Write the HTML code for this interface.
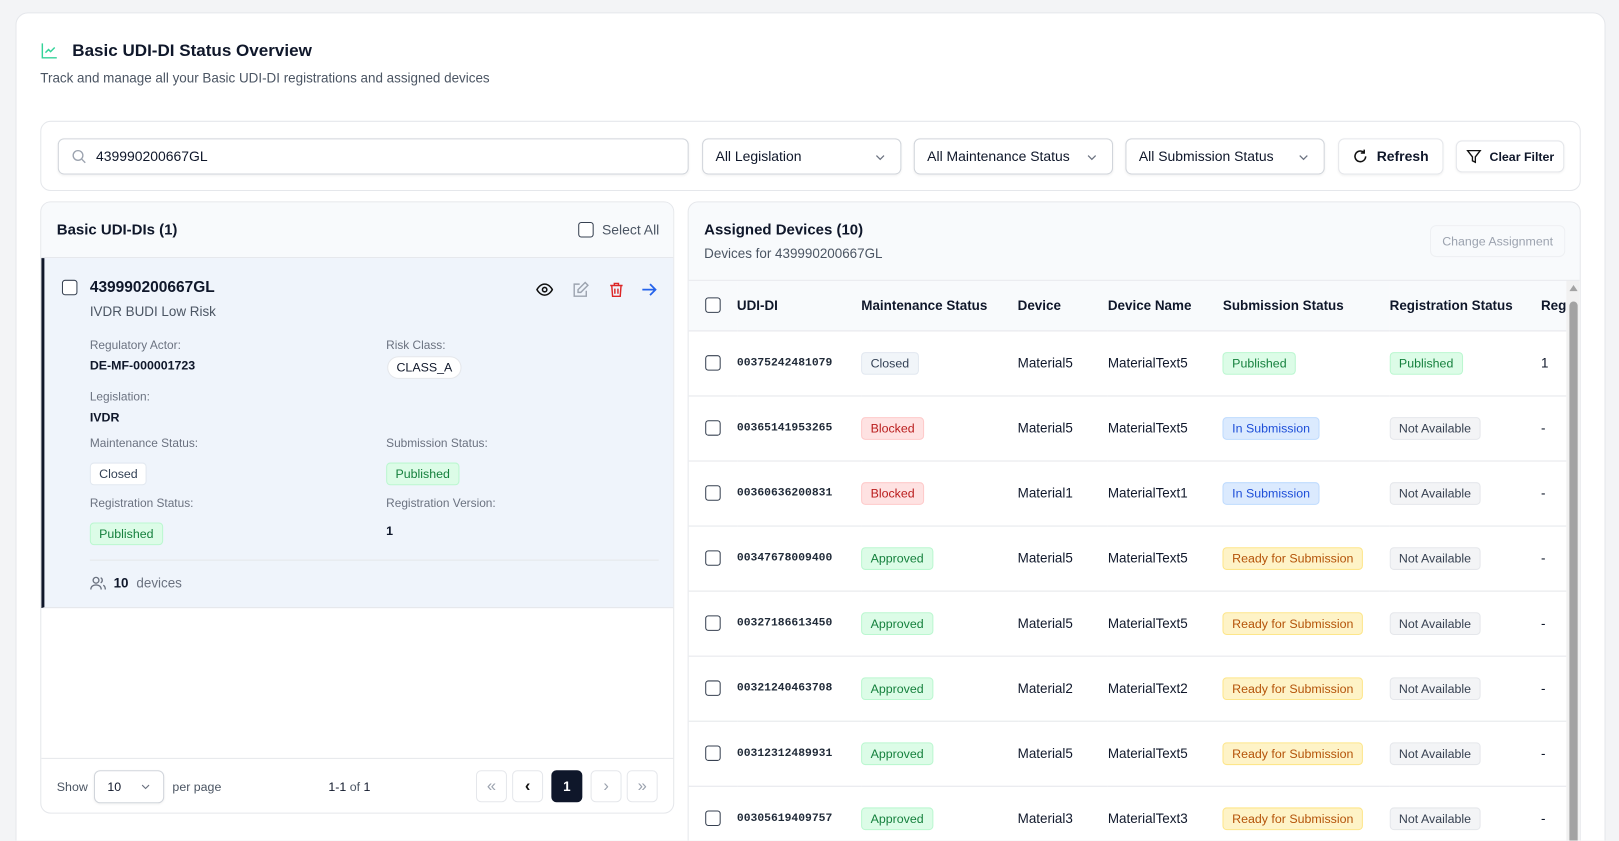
<!DOCTYPE html>
<html><head><meta charset="utf-8"><style>
*{box-sizing:border-box;margin:0;padding:0}
html,body{width:1619px;height:841px;overflow:hidden;background:#f3f4f6;font-family:"Liberation Sans",sans-serif;color:#0f172a}
#w{position:absolute;left:0;top:0;width:1568px;height:814px;overflow:hidden;transform:scale(1.0325);transform-origin:0 0}
.a{position:absolute}
.card{left:15px;top:12px;width:1540px;height:820px;background:#fff;border:1px solid #e5e7eb;border-radius:12px}
.box{border:1px solid #e5e7eb;border-radius:10px;background:#fff}
.inp{border:1px solid #d1d5db;border-radius:6px;background:#fff;font-size:13.5px;display:flex;align-items:center;padding-left:12px;box-shadow:0 1px 2px rgba(0,0,0,.05)}
.chev{position:absolute;right:14px;top:12px}
.btn{border:1px solid #e5e7eb;border-radius:6px;background:#fff;display:flex;align-items:center;justify-content:center;gap:8px;font-size:13.5px;font-weight:bold;box-shadow:0 1px 2px rgba(0,0,0,.05)}
.cb{width:15px;height:15px;border:1.5px solid #374151;border-radius:3px;background:#fff}
.lbl{font-size:11.5px;color:#6b7280}
.val{font-size:12px;font-weight:bold}
.b{display:inline-block;font-size:12px;padding:3px 8px;border-radius:4px;border:1px solid}
.closed{background:#f1f5f9;border-color:#e2e8f0;color:#334155}
.pub{background:#dcfce7;border-color:#bbf7d0;color:#15803d}
.blk{background:#fee2e2;border-color:#fecaca;color:#b91c1c}
.ins{background:#dbeafe;border-color:#bfdbfe;color:#1d4ed8}
.rdy{background:#fef3c7;border-color:#fde68a;color:#b45309}
.na{background:#f3f4f6;border-color:#e5e7eb;color:#374151}
.apr{background:#dcfce7;border-color:#bbf7d0;color:#15803d}
table{border-collapse:collapse;font-size:13px}
td,th{text-align:left;white-space:nowrap;padding:0}
th{font-weight:bold;height:48px;background:#f8fafc;border-bottom:1px solid #e5e7eb}
td{height:63px;border-bottom:1px solid #e5e7eb}
.mono{font-family:"Liberation Mono",monospace;font-size:11px;font-weight:bold;color:#1f2937}
.pg{width:30px;height:31px;border:1px solid #e5e7eb;border-radius:5px;display:flex;align-items:center;justify-content:center;background:#fff;color:#9ca3af}
</style></head><body><div id="w">
<div class="a card"></div>
<svg class="a" style="left:40px;top:41px" width="16" height="16" viewBox="0 0 16 16" fill="none" stroke="#34d399" stroke-width="1.4"><path d="M1 1v14h14"/><path d="M4 10l3-3 2 2 4-4"/></svg>
<div class="a" style="left:70px;top:40px;font-size:16.5px;font-weight:bold">Basic UDI-DI Status Overview</div>
<div class="a" style="left:39px;top:68px;font-size:13px;color:#4b5563">Track and manage all your Basic UDI-DI registrations and assigned devices</div>

<div class="a box" style="left:39px;top:117px;width:1492px;height:68px"></div>
<div class="a inp" style="left:56px;top:134px;width:611px;height:35px"><svg width="15" height="15" viewBox="0 0 16 16" fill="none" stroke="#9ca3af" stroke-width="1.4"><circle cx="7" cy="7" r="5"/><path d="M11 11l3.5 3.5"/></svg><span style="margin-left:9px">439990200667GL</span></div>
<div class="a inp" style="left:680px;top:134px;width:193px;height:35px">All Legislation<svg class="chev" width="11" height="11" viewBox="0 0 12 12" fill="none" stroke="#6b7280" stroke-width="1.3"><path d="M2 4l4 4 4-4"/></svg></div>
<div class="a inp" style="left:885px;top:134px;width:193px;height:35px">All Maintenance Status<svg class="chev" width="11" height="11" viewBox="0 0 12 12" fill="none" stroke="#6b7280" stroke-width="1.3"><path d="M2 4l4 4 4-4"/></svg></div>
<div class="a inp" style="left:1090px;top:134px;width:193px;height:35px">All Submission Status<svg class="chev" width="11" height="11" viewBox="0 0 12 12" fill="none" stroke="#6b7280" stroke-width="1.3"><path d="M2 4l4 4 4-4"/></svg></div>
<div class="a btn" style="left:1296px;top:134px;width:102px;height:35px"><svg width="15" height="15" viewBox="0 0 16 16" fill="none" stroke="#111" stroke-width="1.6"><path d="M13.5 8A5.5 5.5 0 1 1 11.5 3.7"/><path d="M12 1v3.5H8.5"/></svg>Refresh</div>
<div class="a btn" style="left:1410px;top:136px;width:105px;height:31px;font-size:12px"><svg width="15" height="15" viewBox="0 0 16 16" fill="none" stroke="#111" stroke-width="1.4"><path d="M1.5 2h13l-5 6.5V14l-3-1.5v-4z"/></svg>Clear Filter</div>

<!-- left panel -->
<div class="a box" style="left:39px;top:195px;width:614px;height:593px;overflow:hidden">
 <div class="a" style="left:0;top:0;width:614px;height:54px;background:#f8fafc;border-bottom:1px solid #e5e7eb"></div>
 <div class="a" style="left:15px;top:19px;font-size:14.5px;font-weight:bold">Basic UDI-DIs (1)</div>
 <div class="a cb" style="left:520px;top:19px;border-radius:3px"></div>
 <div class="a" style="left:543px;top:19px;font-size:13.5px;color:#4b5563">Select All</div>
 <div class="a" style="left:0;top:54px;width:614px;height:339px;background:#eff4fb;border-left:3px solid #0f172a;border-bottom:1px solid #e5e7eb"></div>
 <div class="a cb" style="left:20px;top:75px"></div>
 <div class="a" style="left:47px;top:74px;font-size:15px;font-weight:bold">439990200667GL</div>
 <div class="a" style="left:47px;top:98px;font-size:13px;color:#4b5563">IVDR BUDI Low Risk</div>
 <svg class="a" style="left:479px;top:76px" width="17" height="17" viewBox="0 0 16 16" fill="none" stroke="#111" stroke-width="1.4"><path d="M1 8s2.5-5 7-5 7 5 7 5-2.5 5-7 5-7-5-7-5z"/><circle cx="8" cy="8" r="2"/></svg>
 <svg class="a" style="left:514px;top:76px" width="17" height="17" viewBox="0 0 16 16" fill="none" stroke="#9ca3af" stroke-width="1.3"><path d="M13 9v5H2V3h5"/><path d="M12 1.5l2.5 2.5L8 10.5H5.5V8z"/></svg>
 <svg class="a" style="left:549px;top:76px" width="16" height="17" viewBox="0 0 16 16" fill="none" stroke="#dc2626" stroke-width="1.4"><path d="M2 4h12M6 4V2h4v2M3.5 4l.8 10.5h7.4L12.5 4M6.5 7v5M9.5 7v5"/></svg>
 <svg class="a" style="left:580px;top:76px" width="17" height="17" viewBox="0 0 16 16" fill="none" stroke="#2563eb" stroke-width="1.6"><path d="M2 8h12M9 3l5 5-5 5"/></svg>
 <div class="a lbl" style="left:47px;top:133px">Regulatory Actor:</div>
 <div class="a val" style="left:47px;top:151px">DE-MF-000001723</div>
 <div class="a lbl" style="left:334px;top:133px">Risk Class:</div>
 <div class="a" style="left:335px;top:149px;border:1px solid #e5e7eb;border-radius:11px;padding:3px 8px;font-size:12px;background:#fff">CLASS_A</div>
 <div class="a lbl" style="left:47px;top:183px">Legislation:</div>
 <div class="a val" style="left:47px;top:201px">IVDR</div>
 <div class="a lbl" style="left:47px;top:228px">Maintenance Status:</div>
 <div class="a b closed" style="left:47px;top:252px;background:#fff">Closed</div>
 <div class="a lbl" style="left:334px;top:228px">Submission Status:</div>
 <div class="a b pub" style="left:334px;top:252px">Published</div>
 <div class="a lbl" style="left:47px;top:286px">Registration Status:</div>
 <div class="a b pub" style="left:47px;top:310px">Published</div>
 <div class="a lbl" style="left:334px;top:286px">Registration Version:</div>
 <div class="a val" style="left:334px;top:311px">1</div>
 <div class="a" style="left:47px;top:346px;width:551px;height:1px;background:#e5e7eb"></div>
 <svg class="a" style="left:47px;top:361px" width="16" height="16" viewBox="0 0 16 16" fill="none" stroke="#6b7280" stroke-width="1.3"><circle cx="6" cy="5" r="2.8"/><path d="M1 14c0-3 2.2-4.5 5-4.5s5 1.5 5 4.5M10.5 2.5a2.8 2.8 0 0 1 0 5M13 9.8c1.3.7 2 2 2 4.2"/></svg>
 <div class="a" style="left:70px;top:361px;font-size:13px"><b>10</b> <span style="color:#6b7280;margin-left:4px">devices</span></div>
 <div class="a" style="left:0;top:538px;width:614px;height:1px;background:#e5e7eb"></div>
 <div class="a" style="left:15px;top:559px;font-size:12px;color:#4b5563">Show</div>
 <div class="a inp" style="left:51px;top:550px;width:68px;height:32px;font-size:12px">10<svg style="position:absolute;right:12px;top:10px" width="10" height="10" viewBox="0 0 12 12" fill="none" stroke="#6b7280" stroke-width="1.3"><path d="M2 4l4 4 4-4"/></svg></div>
 <div class="a" style="left:127px;top:559px;font-size:12px;color:#4b5563">per page</div>
 <div class="a" style="left:278px;top:559px;font-size:12px"><b style="font-weight:normal">1-1</b> <span style="color:#4b5563">of</span> 1</div>
 <div class="a pg" style="left:421px;top:550px">«</div>
 <div class="a pg" style="left:456px;top:550px;color:#111;font-weight:bold">‹</div>
 <div class="a pg" style="left:494px;top:550px;background:#0f172a;color:#fff;border-color:#0f172a;font-weight:bold;font-size:13px">1</div>
 <div class="a pg" style="left:532px;top:550px">›</div>
 <div class="a pg" style="left:567px;top:550px">»</div>
</div>

<!-- right panel -->
<div class="a box" style="left:666px;top:195px;width:865px;height:640px;overflow:hidden;background:#f8fafc">
 <div class="a" style="left:15px;top:19px;font-size:14.5px;font-weight:bold">Assigned Devices (10)</div>
 <div class="a" style="left:15px;top:42px;font-size:13px;color:#4b5563">Devices for 439990200667GL</div>
 <div class="a" style="left:718px;top:22px;width:131px;height:31px;border:1px solid #eef0f3;border-radius:6px;font-size:12px;color:#9ca3af;display:flex;align-items:center;justify-content:center">Change Assignment</div>
 <div class="a" style="left:0;top:75px;width:865px;height:600px;background:#fff;border-top:1px solid #e5e7eb">
 <table style="width:850px">
 <tr><th style="width:47px;padding-left:16px"><div class="cb"></div></th><th style="width:121px">UDI-DI</th><th style="width:152px">Maintenance Status</th><th style="width:88px">Device</th><th style="width:112px">Device Name</th><th style="width:162px">Submission Status</th><th style="width:147px">Registration Status</th><th>Reg</th></tr>
 <tr><td style="padding-left:16px"><div class="cb"></div></td><td class="mono">00375242481079</td><td><span class="b closed">Closed</span></td><td>Material5</td><td>MaterialText5</td><td><span class="b pub">Published</span></td><td><span class="b pub">Published</span></td><td>1</td></tr>
 <tr><td style="padding-left:16px"><div class="cb"></div></td><td class="mono">00365141953265</td><td><span class="b blk">Blocked</span></td><td>Material5</td><td>MaterialText5</td><td><span class="b ins">In Submission</span></td><td><span class="b na">Not Available</span></td><td>-</td></tr>
 <tr><td style="padding-left:16px"><div class="cb"></div></td><td class="mono">00360636200831</td><td><span class="b blk">Blocked</span></td><td>Material1</td><td>MaterialText1</td><td><span class="b ins">In Submission</span></td><td><span class="b na">Not Available</span></td><td>-</td></tr>
 <tr><td style="padding-left:16px"><div class="cb"></div></td><td class="mono">00347678009400</td><td><span class="b apr">Approved</span></td><td>Material5</td><td>MaterialText5</td><td><span class="b rdy">Ready for Submission</span></td><td><span class="b na">Not Available</span></td><td>-</td></tr>
 <tr><td style="padding-left:16px"><div class="cb"></div></td><td class="mono">00327186613450</td><td><span class="b apr">Approved</span></td><td>Material5</td><td>MaterialText5</td><td><span class="b rdy">Ready for Submission</span></td><td><span class="b na">Not Available</span></td><td>-</td></tr>
 <tr><td style="padding-left:16px"><div class="cb"></div></td><td class="mono">00321240463708</td><td><span class="b apr">Approved</span></td><td>Material2</td><td>MaterialText2</td><td><span class="b rdy">Ready for Submission</span></td><td><span class="b na">Not Available</span></td><td>-</td></tr>
 <tr><td style="padding-left:16px"><div class="cb"></div></td><td class="mono">00312312489931</td><td><span class="b apr">Approved</span></td><td>Material5</td><td>MaterialText5</td><td><span class="b rdy">Ready for Submission</span></td><td><span class="b na">Not Available</span></td><td>-</td></tr>
 <tr><td style="padding-left:16px"><div class="cb"></div></td><td class="mono">00305619409757</td><td><span class="b apr">Approved</span></td><td>Material3</td><td>MaterialText3</td><td><span class="b rdy">Ready for Submission</span></td><td><span class="b na">Not Available</span></td><td>-</td></tr>
 </table>
 </div>
 <div class="a" style="left:850px;top:76px;width:15px;height:600px;background:#f1f1f1"></div>
 <div class="a" style="left:853px;top:96px;width:8px;height:580px;background:#a3a3a3;border-radius:4px"></div>
 <div class="a" style="left:853px;top:80px;width:0;height:0;border-left:4px solid transparent;border-right:4px solid transparent;border-bottom:6px solid #a3a3a3"></div>
</div>
</div></body></html>
